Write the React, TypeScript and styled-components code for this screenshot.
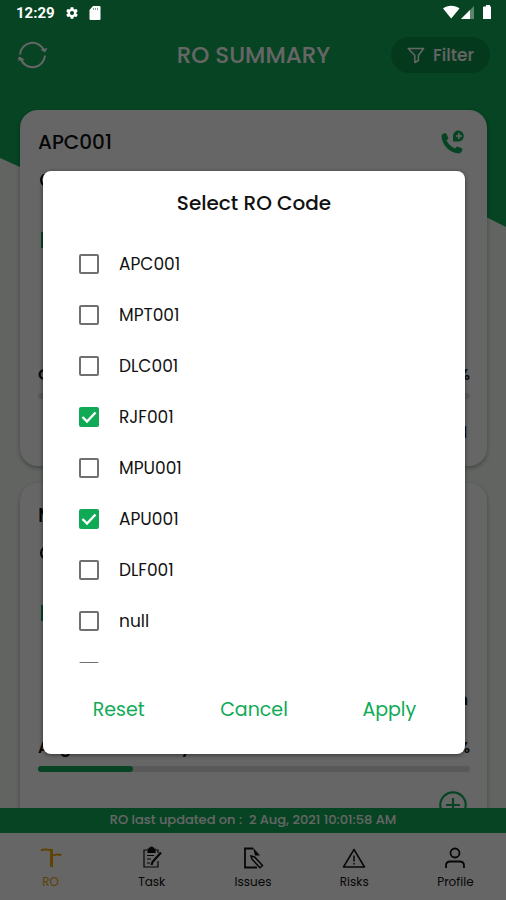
import React, { useState } from "react";
import styled, { createGlobalStyle, css } from "styled-components";

const GREEN = "#10aa57";
const INK = "#111111";

const GlobalStyle = createGlobalStyle`
  *, *::before, *::after { box-sizing: border-box; }
  body { margin: 0; }
  body, button, input { font-family: "Poppins", "Inter", sans-serif; }
  button { border: 0; padding: 0; background: none; cursor: pointer; }
`;

const Screen = styled.div`
  position: relative;
  isolation: isolate;
  display: flex;
  flex-direction: column;
  height: 100vh;
  overflow: hidden;
  background: #f2faf0;
  color: ${INK};
`;

const Wave = styled.svg`
  position: absolute;
  z-index: -1;
  top: 0;
  left: 0;
  width: 100%;
  height: 228px;
  fill: ${GREEN};
`;

const StatusBar = styled.div`
  position: absolute;
  z-index: 3;
  top: 0;
  left: 0;
  right: 0;
  display: flex;
  align-items: center;
  gap: 10px;
  height: 26px;
  padding: 0 13px 0 16px;
  color: #ffffff;
  font: 700 15px Roboto, sans-serif;

  svg { display: block; }
`;

const StatusRight = styled.div`
  display: flex;
  align-items: center;
  margin-left: auto;
`;

const Header = styled.header`
  display: grid;
  grid-template-columns: 1fr auto 1fr;
  align-items: center;
  padding: 37px 16px 35px 17px;
  color: #ffffff;
`;

const RefreshButton = styled.button`
  justify-self: start;
  display: flex;
  color: inherit;
`;

const Title = styled.h1`
  margin: 0;
  font-size: 23px;
  font-weight: 500;
  line-height: 32px;
`;

const FilterButton = styled.button`
  justify-self: end;
  display: flex;
  align-items: center;
  gap: 8px;
  height: 36px;
  padding: 0 16px;
  border-radius: 18px;
  background: #0d9049;
  color: inherit;
  font-size: 17px;
  font-weight: 500;
`;

const CardList = styled.main`
  flex: 1;
  min-height: 0;
  overflow: hidden;
  display: flex;
  flex-direction: column;
  gap: 17px;
  padding: 2px 19px 0 20px;
`;

const Card = styled.article`
  flex: none;
  display: flex;
  flex-direction: column;
  padding: 16px 17px 20px 18px;
  border-radius: 18px;
  background: #ffffff;
  box-shadow: 0 2px 4px rgba(0, 0, 0, 0.3);
`;

const CardLine = styled.div<{ $height: number; $inset?: number }>`
  display: flex;
  align-items: center;
  justify-content: space-between;
  height: ${(p) => p.$height}px;
  padding-right: ${(p) => p.$inset ?? 0}px;
  font-size: 16px;
  font-weight: 600;
`;

const CardTitle = styled.h2`
  margin: 0;
  font-size: 20px;
  font-weight: 500;
`;

const IconButton = styled.button`
  display: flex;
  margin-left: auto;
  color: ${GREEN};
`;

const Value = styled.span`
  margin-left: auto;
`;

const Dot = styled.span`
  width: 14px;
  height: 14px;
  margin-left: 2px;
  border: 2px solid ${INK};
  border-radius: 7px;
`;

const Chip = styled.span`
  width: 16px;
  height: 16px;
  margin-left: 3px;
  background: ${GREEN};
`;

const Track = styled.div`
  height: 6px;
  margin: 7px 0 19px;
  border-radius: 3px;
  background: #dedede;
`;

const Bar = styled.div`
  height: 100%;
  border-radius: 3px;
  background: ${GREEN};
`;

const Note = styled(CardLine)`
  margin: 36px 0 24px;
`;

const UpdatedBar = styled.div`
  flex: none;
  height: 25px;
  background: ${GREEN};
  color: #ffffff;
  font-size: 13px;
  font-weight: 500;
  line-height: 23px;
  text-align: center;
`;

const Nav = styled.nav`
  flex: none;
  display: grid;
  grid-template-columns: repeat(5, 1fr);
  height: 67px;
  padding-top: 13px;
  background: #ffffff;
`;

const NavLink = styled.a<{ $active?: boolean }>`
  display: flex;
  flex-direction: column;
  align-items: center;
  gap: 3px;
  color: ${(p) => (p.$active ? "#eda50c" : INK)};
  font-size: 12px;
  line-height: 18px;
  text-decoration: none;
`;

const Scrim = styled.div`
  position: absolute;
  z-index: 2;
  inset: 0;
  display: flex;
  align-items: center;
  justify-content: center;
  padding: 25px 41px 0 43px;
  background: rgba(0, 0, 0, 0.6);
`;

const Dialog = styled.form`
  flex: 1;
  display: flex;
  flex-direction: column;
  padding-bottom: 29px;
  border-radius: 8px;
  background: #ffffff;
  box-shadow: 0 1px 4px rgba(0, 0, 0, 0.5);
`;

const DialogTitle = styled.h2`
  margin: 0;
  padding: 17px 0 20px;
  font-size: 20px;
  font-weight: 500;
  line-height: 30px;
  text-align: center;
`;

const Options = styled.ul`
  height: 425px;
  margin: 0;
  padding: 0 36px;
  overflow: hidden;
  list-style: none;
`;

const Option = styled.label`
  display: flex;
  align-items: center;
  gap: 20px;
  height: 51px;
  font-size: 17px;
  line-height: 20px;
`;

const Check = styled.input<{ $on: boolean }>`
  appearance: none;
  flex: none;
  width: 20px;
  height: 20px;
  margin: 0;
  border: 2px solid #707070;
  border-radius: 2px;
  background: #ffffff;
  ${(p) =>
    p.$on &&
    css`
      border-color: ${GREEN};
      background: ${GREEN}
        url("data:image/svg+xml,%3Csvg xmlns='http://www.w3.org/2000/svg' viewBox='0 0 16 16'%3E%3Cpath d='M1.500 8l4.500 4.500 8.500-9' fill='none' stroke='white' stroke-width='2.400'/%3E%3C/svg%3E")
        center / 16px 16px no-repeat;
    `}
`;

const Actions = styled.div`
  display: grid;
  grid-template-columns: repeat(3, 1fr);
  padding: 32px 8px 0;
`;

const Action = styled.button`
  color: ${GREEN};
  font-size: 19px;
  line-height: 30px;
`;

const RefreshIcon = () => (
  <svg width="31" height="32" viewBox="0 0 31 32" fill="none" stroke="currentColor" strokeWidth="2">
    <path d="M3 15.500A12.500 12.500 0 0 1 27 11.500" />
    <path d="M28 16.500A12.500 12.500 0 0 1 4 20.500" />
    <path d="M23.500 10.500l7-1.500-2.500 4.500zM7.500 21.500l-7-1.500 2-2.500z" fill="currentColor" stroke="none" />
    <path d="M7.500 20.500l-6.500 1.500 2-4z" fill="currentColor" stroke="none" />
  </svg>
);

const FunnelIcon = () => (
  <svg width="18" height="17" viewBox="0 0 18 17" fill="none" stroke="currentColor" strokeWidth="1.5" strokeLinejoin="round">
    <path d="M1.2 1.5h15.4l-5.2 7v5l-3.6 2v-7z" />
  </svg>
);

const PhoneIcon = () => (
  <svg width="24" height="24" viewBox="0 0 24 24" fill="currentColor">
    <path d="M.5 5.500Q1 3.500 4 3q1-.2 1.500 1L7.200 7.500q.4 1-.4 1.800L5.500 10.500q3 5.500 8.500 8l1.500-1.500q.8-.7 1.700-.3l3.500 1.600q1 .6.700 1.700-.8 3-3 3.400C9 23.500.5 15 .5 5.500z" />
    <path fillRule="evenodd" d="M18 .5a5.500 5.500 0 1 1-1.500 11H12V6A5.600 5.600 0 0 1 18 .5zM17.200 3v2.200H15v1.600h2.200V9h1.600V6.800H21V5.200h-2.200V3z" />
  </svg>
);

const PlusIcon = () => (
  <svg width="28" height="28" viewBox="0 0 28 28" fill="none" stroke="currentColor" strokeWidth="2.2">
    <circle cx="14" cy="14" r="12.7" />
    <path d="M14 7v14M7 14h14" />
  </svg>
);

const RigIcon = () => (
  <svg width="24" height="24" viewBox="0 0 24 24" fill="none" stroke="currentColor">
    <path d="M2 4.500c3-1.500 6-1.500 10 0" strokeWidth="2" />
    <path d="M12.500 3v18" strokeWidth="3" />
    <path d="M13 10c3-2 6-2 9.500-1" strokeWidth="2" />
  </svg>
);

const TaskIcon = () => (
  <svg width="24" height="24" viewBox="0 0 24 24" fill="none" stroke="currentColor" strokeWidth="1.2">
    <path d="M7 4H4v17h14v-6M15 4h3v3M7 9.500h7M7 13h4M7 17h3" />
    <path d="M8 3h1.500a2 2 0 0 1 4 0H15v3.500H8z" fill="currentColor" />
    <path d="M21 6.500L12.500 16l-1 3" strokeWidth="2.2" />
  </svg>
);

const IssueIcon = () => (
  <svg width="24" height="24" viewBox="0 0 24 24" fill="none" stroke="currentColor" strokeWidth="1.8">
    <path d="M12 2.500H4v19h12" />
    <path d="M12 1.500l7 8h-5z" fill="currentColor" stroke="none" />
    <path d="M10 10l3.500 1 8 8.500-2.500 2.200-8-8.500z" strokeWidth="1.5" />
  </svg>
);

const RiskIcon = () => (
  <svg width="24" height="24" viewBox="0 0 24 24" fill="none" stroke="currentColor" strokeWidth="1.5" strokeLinejoin="round">
    <path d="M12 3.500L22.500 21h-21zM12 9.500v6M12 17v1.600" />
  </svg>
);

const ProfileIcon = () => (
  <svg width="24" height="24" viewBox="0 0 24 24" fill="none" stroke="currentColor" strokeWidth="1.8">
    <circle cx="12" cy="7" r="4.500" />
    <path d="M3 22v-2.500c0-3 2-4 4.500-4h9c2.500 0 4.500 1 4.500 4V22" />
  </svg>
);

const GearIcon = () => (
  <svg width="14" height="14" viewBox="0 0 24 24" fill="currentColor">
    <path d="M19.430 12.980c.04-.32.070-.64.070-.98s-.03-.66-.07-.98l2.110-1.650c.19-.15.240-.42.120-.64l-2-3.460c-.12-.22-.39-.3-.61-.22l-2.490 1c-.52-.4-1.080-.73-1.690-.98l-.38-2.650C14.460 2.180 14.250 2 14 2h-4c-.25 0-.46.180-.49.420l-.38 2.650c-.61.250-1.170.590-1.690.980l-2.490-1c-.23-.09-.49 0-.61.220l-2 3.460c-.13.220-.07.490.12.640l2.110 1.650c-.04.320-.07.650-.07.980s.03.660.070.980l-2.110 1.650c-.19.150-.24.420-.12.640l2 3.460c.12.220.390.300.610.220l2.490-1c.52.400 1.080.730 1.690.980l.38 2.650c.03.240.240.420.490.420h4c.25 0 .46-.18.490-.42l.38-2.650c.61-.25 1.170-.59 1.690-.98l2.490 1c.23.090.49 0 .61-.22l2-3.460c.12-.22.070-.49-.12-.64l-2.110-1.650zM12 15.500a3.500 3.500 0 1 1 0-7 3.500 3.500 0 0 1 0 7z" />
  </svg>
);

const SdIcon = () => (
  <svg width="12" height="14" viewBox="0 0 12 14" fill="currentColor">
    <path d="M4 0h6.500A1 1 0 0 1 11.500 1v12a1 1 0 0 1-1 1h-9a1 1 0 0 1-1-1V4z" />
    <path d="M4.500 2v2M6.500 2v2M8.500 2v2" stroke="#064423" strokeOpacity=".5" />
  </svg>
);

const StatusIcons = () => (
  <svg width="50" height="18" viewBox="0 0 50 18" fill="currentColor">
    <path d="M0 4.500C4.500 .8 12 .8 16.500 4.500L8.200 14.500z" />
    <path d="M31 2v13H18z" opacity=".35" />
    <path d="M27 6v9h-9z" />
    <path d="M41 2.500h2V1h4v1.500h1V15h-8V3z" />
  </svg>
);

interface SiteCardProps {
  code: string;
  label: string;
  progress: number;
  note?: string;
  total?: string;
}

const SiteCard = ({ code, label, progress, note, total }: SiteCardProps) => (
  <Card>
    <CardLine $height={32} $inset={5}>
      <CardTitle>{code}</CardTitle>
      <IconButton type="button" aria-label={`Call ${code}`}>
        <PhoneIcon />
      </IconButton>
    </CardLine>
    <CardLine $height={44}>
      <Dot />
    </CardLine>
    <CardLine $height={76}>
      <Chip />
    </CardLine>
    <Note $height={24} $inset={2}>
      <Value>{note}</Value>
    </Note>
    <CardLine $height={24}>
      <span>{label}</span>
      <Value>%</Value>
    </CardLine>
    <Track>
      <Bar style={{ width: `${progress}%` }} />
    </Track>
    <CardLine $height={28} $inset={3}>
      {total ? (
        <Value>{total}</Value>
      ) : (
        <IconButton type="button" aria-label={`Add to ${code}`}>
          <PlusIcon />
        </IconButton>
      )}
    </CardLine>
  </Card>
);

const CODES = ["APC001", "MPT001", "DLC001", "RJF001", "MPU001", "APU001", "DLF001", "null", ""];

const TABS = [
  { label: "RO", Icon: RigIcon },
  { label: "Task", Icon: TaskIcon },
  { label: "Issues", Icon: IssueIcon },
  { label: "Risks", Icon: RiskIcon },
  { label: "Profile", Icon: ProfileIcon },
];

export default function App() {
  const [selected, setSelected] = useState<string[]>(["RJF001", "APU001"]);
  const toggle = (code: string) =>
    setSelected((now) => (now.includes(code) ? now.filter((c) => c !== code) : [...now, code]));

  return (
    <Screen>
      <GlobalStyle />
      <Wave viewBox="0 0 506 228" preserveAspectRatio="none" aria-hidden="true">
        <path d="M0 0H506V227L486 217L300 150L20 167L0 158z" />
      </Wave>
      <StatusBar>
        <span>12:29</span>
        <GearIcon />
        <SdIcon />
        <StatusRight>
          <StatusIcons />
        </StatusRight>
      </StatusBar>
      <Header>
        <RefreshButton type="button" aria-label="Refresh">
          <RefreshIcon />
        </RefreshButton>
        <Title>RO SUMMARY</Title>
        <FilterButton type="button">
          <FunnelIcon />
          Filter
        </FilterButton>
      </Header>
      <CardList>
        <SiteCard code="APC001" label="On" progress={0} total="d" />
        <SiteCard code="MPT001" label="Aug. sales last day" progress={22} note="n" />
      </CardList>
      <UpdatedBar>RO last updated on :&nbsp; 2 Aug, 2021 10:01:58 AM</UpdatedBar>
      <Nav>
        {TABS.map(({ label, Icon }, i) => (
          <NavLink key={label} href={`#${label.toLowerCase()}`} $active={i === 0}>
            <Icon />
            {label}
          </NavLink>
        ))}
      </Nav>
      <Scrim>
        <Dialog role="dialog" aria-modal="true" aria-labelledby="dialog-title">
          <DialogTitle id="dialog-title">Select RO Code</DialogTitle>
          <Options>
            {CODES.map((code) => (
              <li key={code}>
                <Option>
                  <Check
                    type="checkbox"
                    $on={selected.includes(code)}
                    checked={selected.includes(code)}
                    onChange={() => toggle(code)}
                  />
                  {code}
                </Option>
              </li>
            ))}
          </Options>
          <Actions>
            <Action type="button" onClick={() => setSelected([])}>Reset</Action>
            <Action type="button">Cancel</Action>
            <Action type="button">Apply</Action>
          </Actions>
        </Dialog>
      </Scrim>
    </Screen>
  );
}
